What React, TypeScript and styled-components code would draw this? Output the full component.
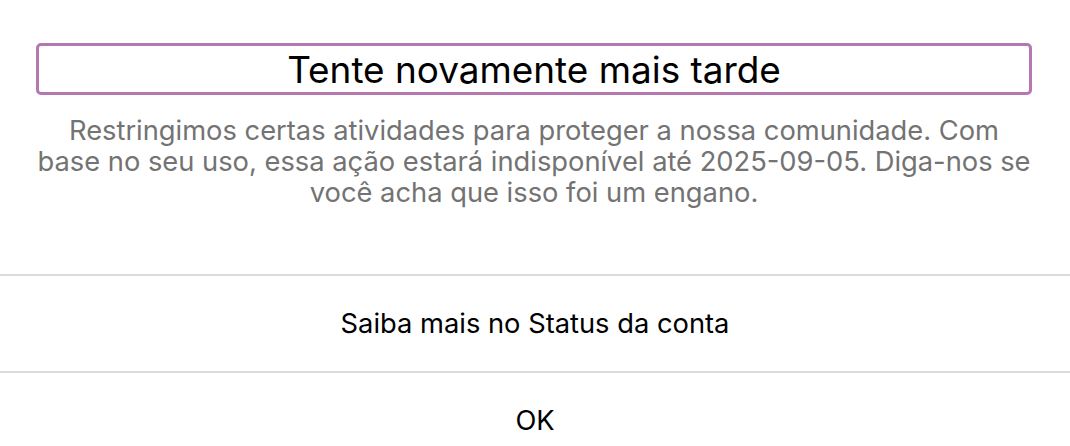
import React from "react";
import styled, { createGlobalStyle } from "styled-components";

const Global = createGlobalStyle`
  html, body { margin: 0; padding: 0; background: #ffffff; }
  body { font-family: Inter, "Liberation Sans", Arial, sans-serif; -webkit-font-smoothing: antialiased; }
`;

const Dialog = styled.div`
  display: flex;
  flex-direction: column;
  width: 1070px;
  background: #ffffff;
`;

const Header = styled.div`
  display: flex;
  flex-direction: column;
  align-items: stretch;
  padding: 43px 38px 0 36px;
  height: 274px;
  box-sizing: border-box;
`;

const Title = styled.h3`
  margin: 0;
  height: 52px;
  box-sizing: border-box;
  border: 3px solid #b576b1;
  border-radius: 5px;
  display: flex;
  align-items: center;
  justify-content: center;
  font-size: 36.9px;
  font-weight: 400;
  color: #000000;
  letter-spacing: 0;
`;

const Body = styled.p`
  margin: 20px -20px 0;
  padding: 0;
  text-align: center;
  font-size: 27.3px;
  line-height: 31px;
  color: #737373;
  white-space: nowrap;
`;

const Action = styled.button`
  display: flex;
  align-items: center;
  justify-content: center;
  width: 100%;
  height: 97px;
  padding: 0;
  margin: 0;
  background: transparent;
  border: none;
  border-top: 2px solid #dbdbdb;
  font-family: Inter, "Liberation Sans", Arial, sans-serif;
  font-size: 27.3px;
  color: #000000;
  cursor: pointer;
`;

export default function App() {
  return (
    <>
      <Global />
      <Dialog>
        <Header>
          <Title>Tente novamente mais tarde</Title>
          <Body>
            Restringimos certas atividades para proteger a nossa comunidade. Com
            <br />
            base no seu uso, essa ação estará indisponível até 2025-09-05. Diga-nos se
            <br />
            você acha que isso foi um engano.
          </Body>
        </Header>
        <Action>Saiba mais no Status da conta</Action>
        <Action>OK</Action>
      </Dialog>
    </>
  );
}
